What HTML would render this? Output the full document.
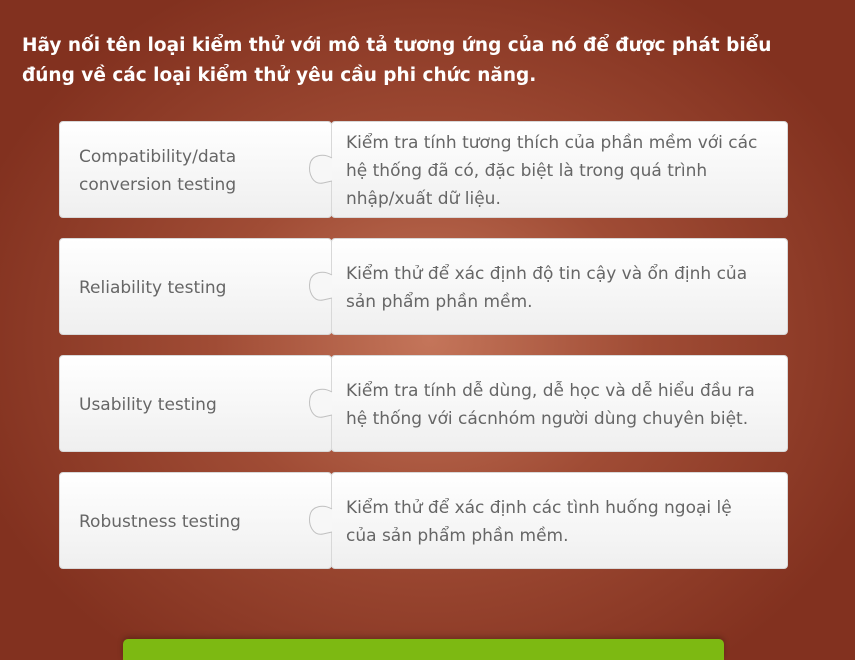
<!DOCTYPE html><html><head><meta charset="utf-8"><style>
html,body{margin:0;width:855px;height:660px;overflow:hidden}
body{font-family:"DejaVu Sans","Liberation Sans",sans-serif;background:radial-gradient(ellipse 480px 400px at 430px 340px,#c4755a 0%,#a04c35 45%,#82311f 100%);position:relative}
h1{position:absolute;left:22px;top:31px;margin:0;font-size:18.5px;line-height:30px;color:#fff;font-weight:bold;width:790px}
.b{position:absolute;background:linear-gradient(#fff,#efefef);border:1px solid #d8d8d8;border-radius:4px;box-sizing:border-box;color:#666;font-size:17px;line-height:28px;display:flex;align-items:center;padding-top:2px}
.l{left:59px;width:273px;height:97px;padding-left:19px}
.r{left:331px;width:457px;height:97px;padding-left:14px;padding-right:24px}
svg{position:absolute}
.g{position:absolute;left:123px;top:639px;width:601px;height:21px;background:#7db912;border-radius:5px 5px 0 0;box-shadow:0 -2px 6px rgba(0,0,0,.25)}
</style></head><body>
<h1>Hãy nối tên loại kiểm thử với mô tả tương ứng của nó để được phát biểu đúng về các loại kiểm thử yêu cầu phi chức năng.</h1>
<div class="b l" style="top:121px">Compatibility/data<br>conversion testing</div>
<div class="b r" style="top:121px">Kiểm tra tính tương thích của phần mềm với các hệ thống đã có, đặc biệt là trong quá trình nhập/xuất dữ liệu.</div>
<div class="b l" style="top:238px">Reliability testing</div>
<div class="b r" style="top:238px">Kiểm thử để xác định độ tin cậy và ổn định của sản phẩm phần mềm.</div>
<div class="b l" style="top:355px">Usability testing</div>
<div class="b r" style="top:355px">Kiểm tra tính dễ dùng, dễ học và dễ hiểu đầu ra hệ thống với cácnhóm người dùng chuyên biệt.</div>
<div class="b l" style="top:472px">Robustness testing</div>
<div class="b r" style="top:472px">Kiểm thử để xác định các tình huống ngoại lệ của sản phẩm phần mềm.</div>
<svg width="30" height="600" style="left:305px;top:0">
<g fill="#f7f7f7" stroke="#c0c0c0" stroke-width="1">
<path d="M27 158 C18 153 7 155 5 164 C3 174 8 185 18 183 L27 181"/>
<path d="M27 275 C18 270 7 272 5 281 C3 291 8 302 18 300 L27 298"/>
<path d="M27 392 C18 387 7 389 5 398 C3 408 8 419 18 417 L27 415"/>
<path d="M27 509 C18 504 7 506 5 515 C3 525 8 536 18 534 L27 532"/>
</g></svg>
<div class="g"></div>
</body></html>
